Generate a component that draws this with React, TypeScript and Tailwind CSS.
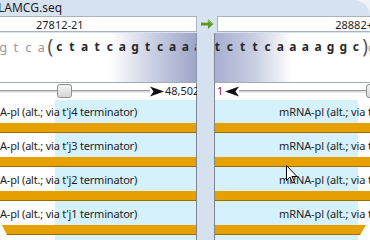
import React from "react";

const font = { fontFamily: '"Noto Sans", "Open Sans", sans-serif' };

const leftGray = ["g", "t", "c", "a"];
const leftBold = ["c", "t", "a", "t", "c", "a", "g", "t", "c", "a", "a", "a"];
const rightBold = ["t", "c", "t", "t", "c", "a", "a", "a", "a", "g", "g", "c"];

const labels = ["j4", "j3", "j2", "j1"];

export default function App() {
  return (
    <div className="w-[370px] h-[240px] overflow-hidden bg-[#eef3f9] relative" style={font}>
      <div className="w-full h-full bg-[#d7e3f0] rounded-tr-[16px] flex flex-col">
        {/* title */}
        <div className="h-[16px] flex items-center text-[12px] text-[#1e1e1e] ml-[-2px] leading-none">LAMCG.seq</div>
        {/* textfields */}
        <div className="h-[16px] flex items-stretch">
          <div className="w-[198px] ml-[-1px] bg-white border border-[#a9b3bf] flex items-center pl-[36px] text-[11px] text-[#1e1e1e] leading-none">27812-21</div>
          <div className="w-[20px] flex items-center justify-center">
            <svg width="13" height="10" viewBox="0 0 13 10">
              <path d="M0 3.5 H7 V0 L12.5 5 L7 10 V6.5 H0 Z" fill="#5a9a2a" />
              <path d="M0.5 3.5 H7 V1 L11.5 5" fill="none" stroke="#9fd36a" strokeWidth="1" />
            </svg>
          </div>
          <div className="flex-1 bg-white border border-[#a9b3bf] border-r-0 flex items-center justify-end text-[11px] text-[#1e1e1e] leading-none pr-0">
            <span className="mr-[-3px]">28882+</span>
          </div>
        </div>
        <div className="h-[1px]" />
        {/* main */}
        <div className="flex-1 grid grid-cols-[197px_18px_155px] min-h-0">
          {/* left column */}
          <div className="flex flex-col min-w-0 overflow-hidden">
            <div
              className="h-[49px] border-r border-[#8e96ad] overflow-hidden"
              style={{ background: "linear-gradient(to right, #ffffff 0%, #ffffff 56%, #c5cbe0 80%, #9ea6c9 100%)" }}
            >
              <div className="flex items-center h-[22px] mt-[3px] whitespace-nowrap">
                <div className="flex ml-[-3px]">
                  {leftGray.map((c, i) => (
                    <span key={i} className="w-[12.6px] text-center text-[13px] text-[#9a9a9a] leading-none">{c}</span>
                  ))}
                </div>
                <span className="text-[19px] leading-none text-[#555] mt-[-2px] w-[8px] text-center">(</span>
                <div className="flex">
                  {leftBold.map((c, i) => (
                    <span key={i} className="w-[12.6px] shrink-0 text-center text-[12px] font-bold text-[#2a2a2a] leading-none">{c}</span>
                  ))}
                </div>
              </div>
            </div>
            <div className="h-[1px] bg-[#a3a9b5]" />
            <div className="h-[17px] bg-white border-r border-[#7d8590] flex items-center relative">
              <div className="absolute left-0 right-[46px] top-[7px] h-[3px] border-t border-[#9a9a9a] border-b border-b-[#e8e8e8] bg-[#dcdcdc]" />
              <div className="absolute left-[57px] top-[1px] w-[15px] h-[14px] rounded-[3px] border border-[#8f8f8f] bg-gradient-to-b from-[#f4f4f4] to-[#d6d6d6]" />
              <svg className="absolute left-[150px] top-[3px]" width="14" height="11" viewBox="0 0 14 11">
                <path d="M0 0.5 L14 5.5 L0 10.5 L3.5 5.5 Z" fill="#111" />
              </svg>
              <span className="absolute left-[165px] top-[1px] text-[11px] text-[#1e1e1e] leading-[14px]">48,502</span>
            </div>
            <div className="flex-1 relative border-r border-[#7d8590]" style={{ background: "linear-gradient(to right, #ffffff 0, #ffffff 55px, #d4f1fc 55px)" }}>
              {labels.map((l, i) => (
                <div key={l} className={i === 3 ? "" : "mb-[1px]"}>
                  <div className="h-[23px] flex items-center text-[11px] text-[#1e1e1e] whitespace-nowrap leading-none tracking-[-0.2px]">
                    A-pl (alt.; via t'{l} terminator)
                  </div>
                  {i === 3 ? (
                    <div
                      className="h-[10px] bg-[#e6a100] border-b border-[#9c6c00]"
                      style={{ clipPath: "polygon(2px 0, 100% 0, 100% 100%, 7px 100%)" }}
                    />
                  ) : (
                    <div className="h-[10px] bg-[#e6a100] border-b border-[#9c6c00]" />
                  )}
                </div>
              ))}
            </div>
          </div>
          {/* divider strip */}
          <div className="bg-[#d5e1ee] border-r border-[#7d8590]" />
          {/* right column */}
          <div className="flex flex-col min-w-0 overflow-hidden">
            <div
              className="h-[49px] overflow-hidden"
              style={{ background: "linear-gradient(to right, #a8afd0 0%, #c8cde2 25%, #ffffff 50%, #ffffff 100%)" }}
            >
              <div className="flex items-center h-[22px] mt-[3px] whitespace-nowrap">
                <div className="flex ml-[-4px]">
                  {rightBold.map((c, i) => (
                    <span key={i} className="w-[12.6px] shrink-0 text-center text-[12px] font-bold text-[#2a2a2a] leading-none">{c}</span>
                  ))}
                </div>
                <span className="text-[19px] leading-none text-[#555] mt-[-2px] w-[7px] text-center">)</span>
                <span className="text-[13px] text-[#9a9a9a] leading-none">c</span>
              </div>
            </div>
            <div className="h-[1px] bg-[#a3a9b5]" />
            <div className="h-[17px] bg-white flex items-center relative">
              <span className="absolute left-[2px] top-[1px] text-[11px] text-[#8a2040] leading-[14px]">1</span>
              <svg className="absolute left-[10px] top-[3px]" width="14" height="11" viewBox="0 0 14 11">
                <path d="M14 0.5 L0 5.5 L14 10.5 L10.5 5.5 Z" fill="#111" />
              </svg>
              <div className="absolute left-[24px] right-0 top-[7px] h-[3px] border-t border-[#9a9a9a] border-b border-b-[#e8e8e8] bg-[#dcdcdc]" />
              <div className="absolute left-[151px] top-[1px] w-[15px] h-[14px] rounded-[3px] border border-[#8f8f8f] bg-gradient-to-b from-[#f4f4f4] to-[#d6d6d6]" />
            </div>
            <div className="flex-1 relative" style={{ background: "linear-gradient(to right, #d4f1fc 0, #d4f1fc 143px, #ffffff 143px)" }}>
              {labels.map((l, i) => (
                <div key={l} className={i === 3 ? "" : "mb-[1px]"}>
                  <div className="h-[23px] flex items-center text-[11px] text-[#1e1e1e] whitespace-nowrap leading-none pl-[64px] tracking-[-0.1px]">
                    mRNA-pl (alt.; via t'{l} terminator)
                  </div>
                  {i === 3 ? (
                    <div
                      className="h-[10px] bg-[#e6a100] border-b border-[#9c6c00]"
                      style={{ clipPath: "polygon(0 0, 151px 0, 145px 100%, 0 100%)" }}
                    />
                  ) : (
                    <div className="h-[10px] bg-[#e6a100] border-b border-[#9c6c00]" />
                  )}
                </div>
              ))}
            </div>
          </div>
        </div>
      </div>
      {/* mouse cursor */}
      <svg className="absolute left-[286px] top-[165px]" width="12" height="19" viewBox="0 0 12 19">
        <path d="M0.5 0.5 L0.5 15.5 L4 12 L6.5 18 L8.5 17 L6 11.5 L11 11.5 Z" fill="#fff" stroke="#000" strokeWidth="1" />
      </svg>
    </div>
  );
}
